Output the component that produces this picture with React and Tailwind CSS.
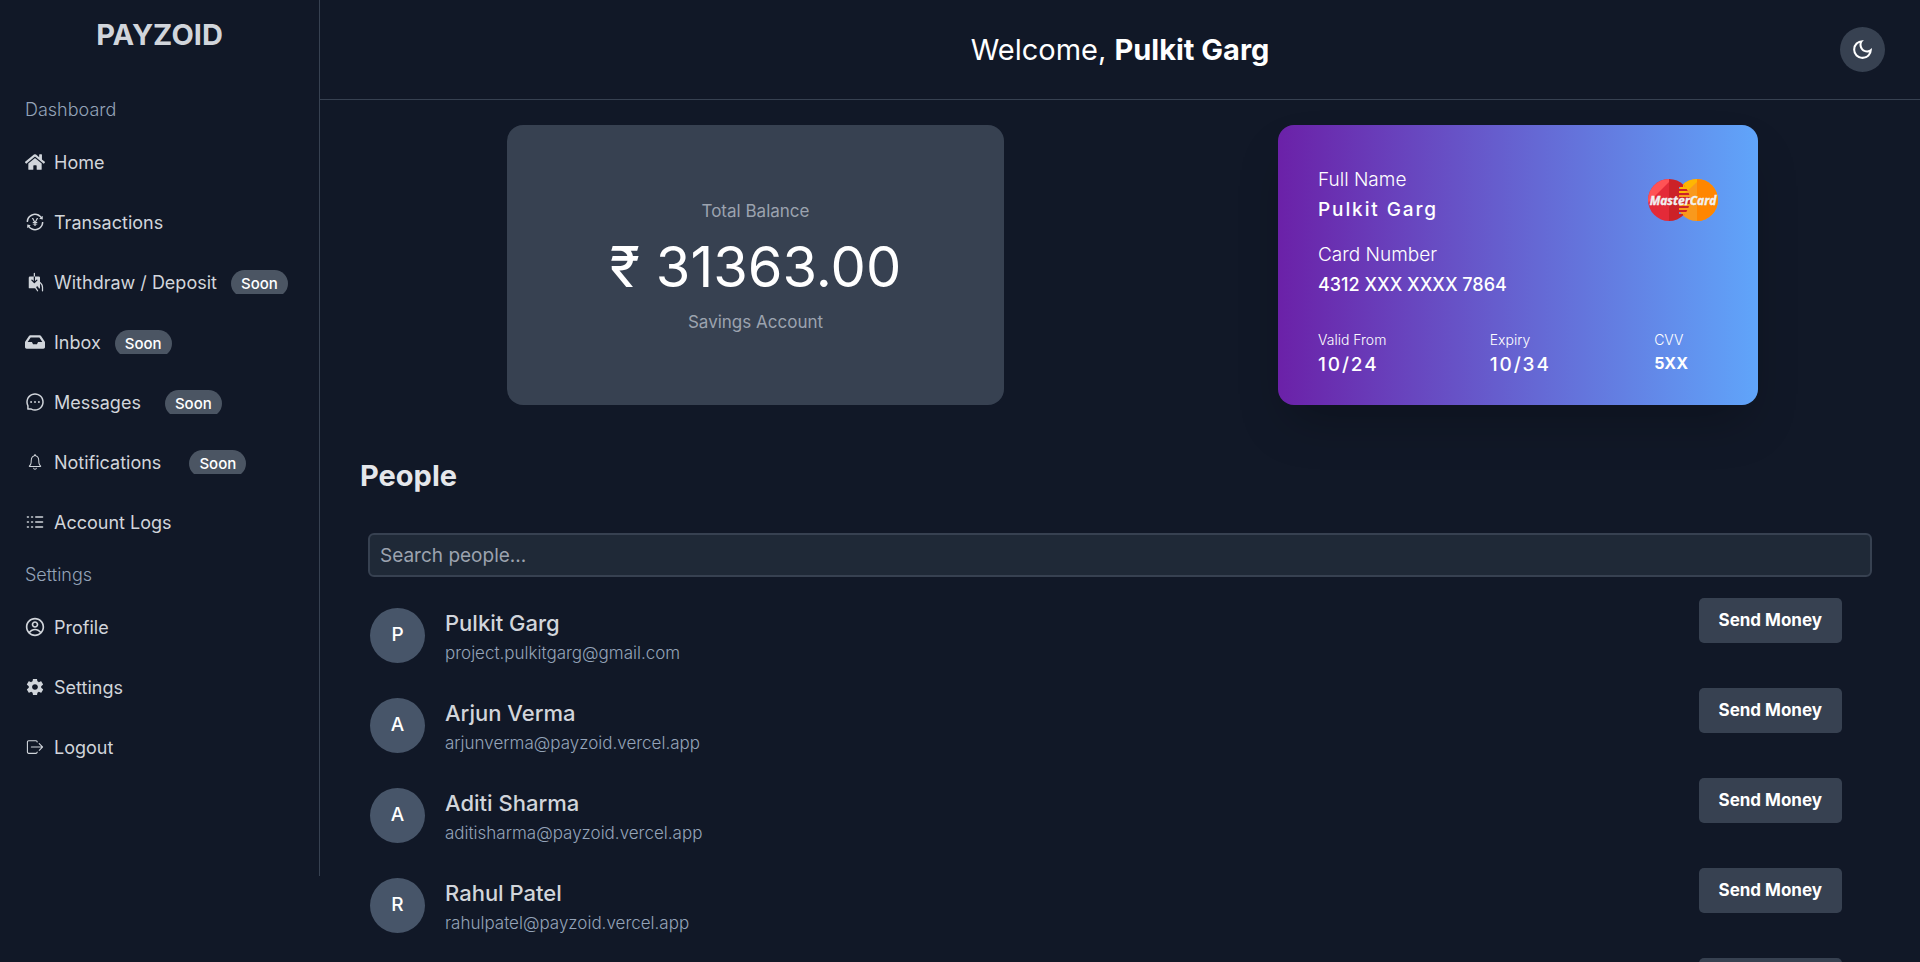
import React from "react";
import { AiOutlineMessage, AiOutlineTransaction } from "react-icons/ai";
import { CgProfile } from "react-icons/cg";
import { FaHome, FaInbox } from "react-icons/fa";
import { IoIosLogOut, IoIosNotificationsOutline, IoMdSettings } from "react-icons/io";
import { LuLogs } from "react-icons/lu";
import { MdOutlineDarkMode } from "react-icons/md";
import { PiHandWithdrawFill } from "react-icons/pi";

const dashboardLinks = [
  { label: "Home", icon: FaHome },
  { label: "Transactions", icon: AiOutlineTransaction },
  { label: "Withdraw / Deposit", icon: PiHandWithdrawFill, soon: "ml-3.5" },
  { label: "Inbox", icon: FaInbox, soon: "ml-3.5" },
  { label: "Messages", icon: AiOutlineMessage, soon: "ml-6" },
  { label: "Notifications", icon: IoIosNotificationsOutline, soon: "ml-7" },
  { label: "Account Logs", icon: LuLogs },
];

const settingsLinks = [
  { label: "Profile", icon: CgProfile },
  { label: "Settings", icon: IoMdSettings },
  { label: "Logout", icon: IoIosLogOut },
];

const people = [
  { name: "Pulkit Garg", email: "project.pulkitgarg@gmail.com" },
  { name: "Arjun Verma", email: "arjunverma@payzoid.vercel.app" },
  { name: "Aditi Sharma", email: "aditisharma@payzoid.vercel.app" },
  { name: "Rahul Patel", email: "rahulpatel@payzoid.vercel.app" },
  { name: "Priya Singh", email: "priyasingh@payzoid.vercel.app" },
];

function NavSection({ title, links }) {
  return (
    <section>
      <h2 className="flex h-[45px] items-center text-[18px] font-light text-[#94a3b8]">{title}</h2>
      <ul>
        {links.map(({ label, icon: Icon, soon }) => (
          <li key={label}>
            <a href="#" className="flex h-[60px] items-center text-[18px] whitespace-nowrap">
              <Icon size={20} className="mr-[9px] shrink-0" />
              {label}
              {soon && (
                <span className={`${soon} h-6 overflow-hidden`}>
                  <span className="block rounded-full bg-[#4b5563] px-[10px] text-[15px] leading-[27px] font-medium text-white">
                    Soon
                  </span>
                </span>
              )}
            </a>
          </li>
        ))}
      </ul>
    </section>
  );
}

function Sidebar() {
  return (
    <aside className="w-80 shrink-0 self-start border-r border-[#374151] pb-[99px]">
      <div className="flex h-[70px] items-center justify-center text-[29px] font-bold">PAYZOID</div>
      <nav className="px-[25px] pt-[17px]">
        <NavSection title="Dashboard" links={dashboardLinks} />
        <NavSection title="Settings" links={settingsLinks} />
      </nav>
    </aside>
  );
}

function Header() {
  return (
    <header className="grid h-[100px] grid-cols-[1fr_auto_1fr] items-center border-b border-[#374151] px-[35px] text-white">
      <h1 className="col-start-2 text-[29px] font-normal">
        Welcome, <span className="font-bold">Pulkit Garg</span>
      </h1>
      <button
        type="button"
        aria-label="Toggle theme"
        className="justify-self-end rounded-full bg-[#374151] p-[10px]"
      >
        <MdOutlineDarkMode size={25} />
      </button>
    </header>
  );
}

function BalanceCard() {
  return (
    <section className="flex h-[280px] w-[497px] flex-col items-center justify-center rounded-2xl bg-[#374151] pt-[3px] text-[17px] text-[#9ca3af]">
      <p className="leading-[25px]">Total Balance</p>
      <p className="text-[56px] leading-[86px] text-white">₹ 31363.00</p>
      <p className="leading-[25px]">Savings Account</p>
    </section>
  );
}

function MasterCardLogo() {
  return (
    <svg viewBox="0 0 70 42" className="h-[42px] w-[70px]" role="img" aria-label="MasterCard">
      <defs>
        <clipPath id="mc-left">
          <circle cx="21" cy="21" r="21" />
        </clipPath>
        <clipPath id="mc-right">
          <circle cx="49" cy="21" r="21" />
        </clipPath>
      </defs>
      <g clipPath="url(#mc-right)">
        <path d="M28 0h42v42H28z" fill="#f9991c" />
        <path d="M49 0h21v42H49z" fill="#ff8600" />
        <path d="M28 0h21v3L35 16h-7z" fill="#ffb602" />
      </g>
      <g clipPath="url(#mc-left)">
        <path d="M0 0h21v42H0z" fill="#e42a38" />
        <path d="M21 0v3L0 24V0z" fill="#ff5255" />
        <path d="M21 0h10v42H21z" fill="#cc2127" />
        <path
          d="M31 0h11v8H31zM31 10h11v2H31zM31 14h11v2H31zM31 18h11v7H31zM31 27h11v2H31zM31 31h11v2H31zM31 35h11v7H31z"
          fill="#cc2127"
        />
        <path d="M35 0h7v10h-7z" fill="#ffb602" />
        <path d="M35 35h7v7h-7z" fill="#f9991c" />
      </g>
      <text
        x="35"
        y="26"
        textAnchor="middle"
        className="fill-[#f1f1f1] stroke-[#f1f1f1] stroke-[0.4px] font-['Open_Sans',sans-serif] text-[12px] font-bold italic"
      >
        MasterCard
      </text>
    </svg>
  );
}

function CreditCard() {
  return (
    <section className="h-[280px] w-[480px] rounded-2xl bg-[linear-gradient(to_right,#6b21a8,#60a5fa)] px-10 pt-10 text-[19px] leading-[30px] text-white shadow-2xl">
      <div className="flex items-start justify-between">
        <div>
          <p className="font-light">Full Name</p>
          <p className="font-medium tracking-widest">Pulkit Garg</p>
        </div>
        <div className="flex h-[70px] items-center">
          <MasterCardLogo />
        </div>
      </div>
      <div className="mt-[5px]">
        <p className="font-light">Card Number</p>
        <p className="text-[18px] font-medium">4312 XXX XXXX 7864</p>
      </div>
      <div className="mt-[30px] flex justify-between pr-[30px]">
        <div>
          <p className="text-sm leading-5 font-light">Valid From</p>
          <p className="font-medium tracking-widest">10/24</p>
        </div>
        <div>
          <p className="text-sm leading-5 font-light">Expiry</p>
          <p className="font-medium tracking-widest">10/34</p>
        </div>
        <div>
          <p className="text-sm leading-5 font-light">CVV</p>
          <p className="text-base leading-[26px] font-bold">5XX</p>
        </div>
      </div>
    </section>
  );
}

function Person({ name, email }) {
  return (
    <li className="flex h-[90px] items-start justify-between">
      <div className="flex gap-5 pt-[10px]">
        <div className="flex size-[55px] items-center justify-center rounded-full bg-[#475569] text-[19px] font-medium text-white">
          {name[0]}
        </div>
        <div className="leading-[30px]">
          <p className="text-[22px] font-medium">{name}</p>
          <p className="text-[17px] font-light text-[#94a3b8]">{email}</p>
        </div>
      </div>
      <button
        type="button"
        className="h-[45px] rounded-[5px] bg-[#374151] px-5 text-[17px] font-bold text-white"
      >
        Send Money
      </button>
    </li>
  );
}

export default function App() {
  return (
    <div className="flex h-screen overflow-y-auto bg-[#111827] font-['Inter',sans-serif] text-[#d1d5db] [scrollbar-width:none]">
      <Sidebar />
      <div className="min-w-0 flex-1">
        <Header />
        <main>
          <div className="flex flex-wrap justify-around gap-y-6 pt-[25px] pr-[25px] pl-[50px]">
            <BalanceCard />
            <CreditCard />
          </div>
          <section className="mt-[51px]">
            <h2 className="px-10 text-[29px] leading-10 font-bold text-[#e5e7eb]">People</h2>
            <div className="mt-[37px] px-12">
              <input
                type="text"
                aria-label="Search people"
                placeholder="Search people..."
                className="h-11 w-full rounded-md border-2 border-[#374151] bg-[#1f2937] px-[10px] text-[19px] placeholder:text-[#9ca3af]"
              />
            </div>
            <ul className="mt-[21px] pr-[78px] pl-[50px]">
              {people.map((person) => (
                <Person key={person.email} {...person} />
              ))}
            </ul>
          </section>
        </main>
      </div>
    </div>
  );
}
